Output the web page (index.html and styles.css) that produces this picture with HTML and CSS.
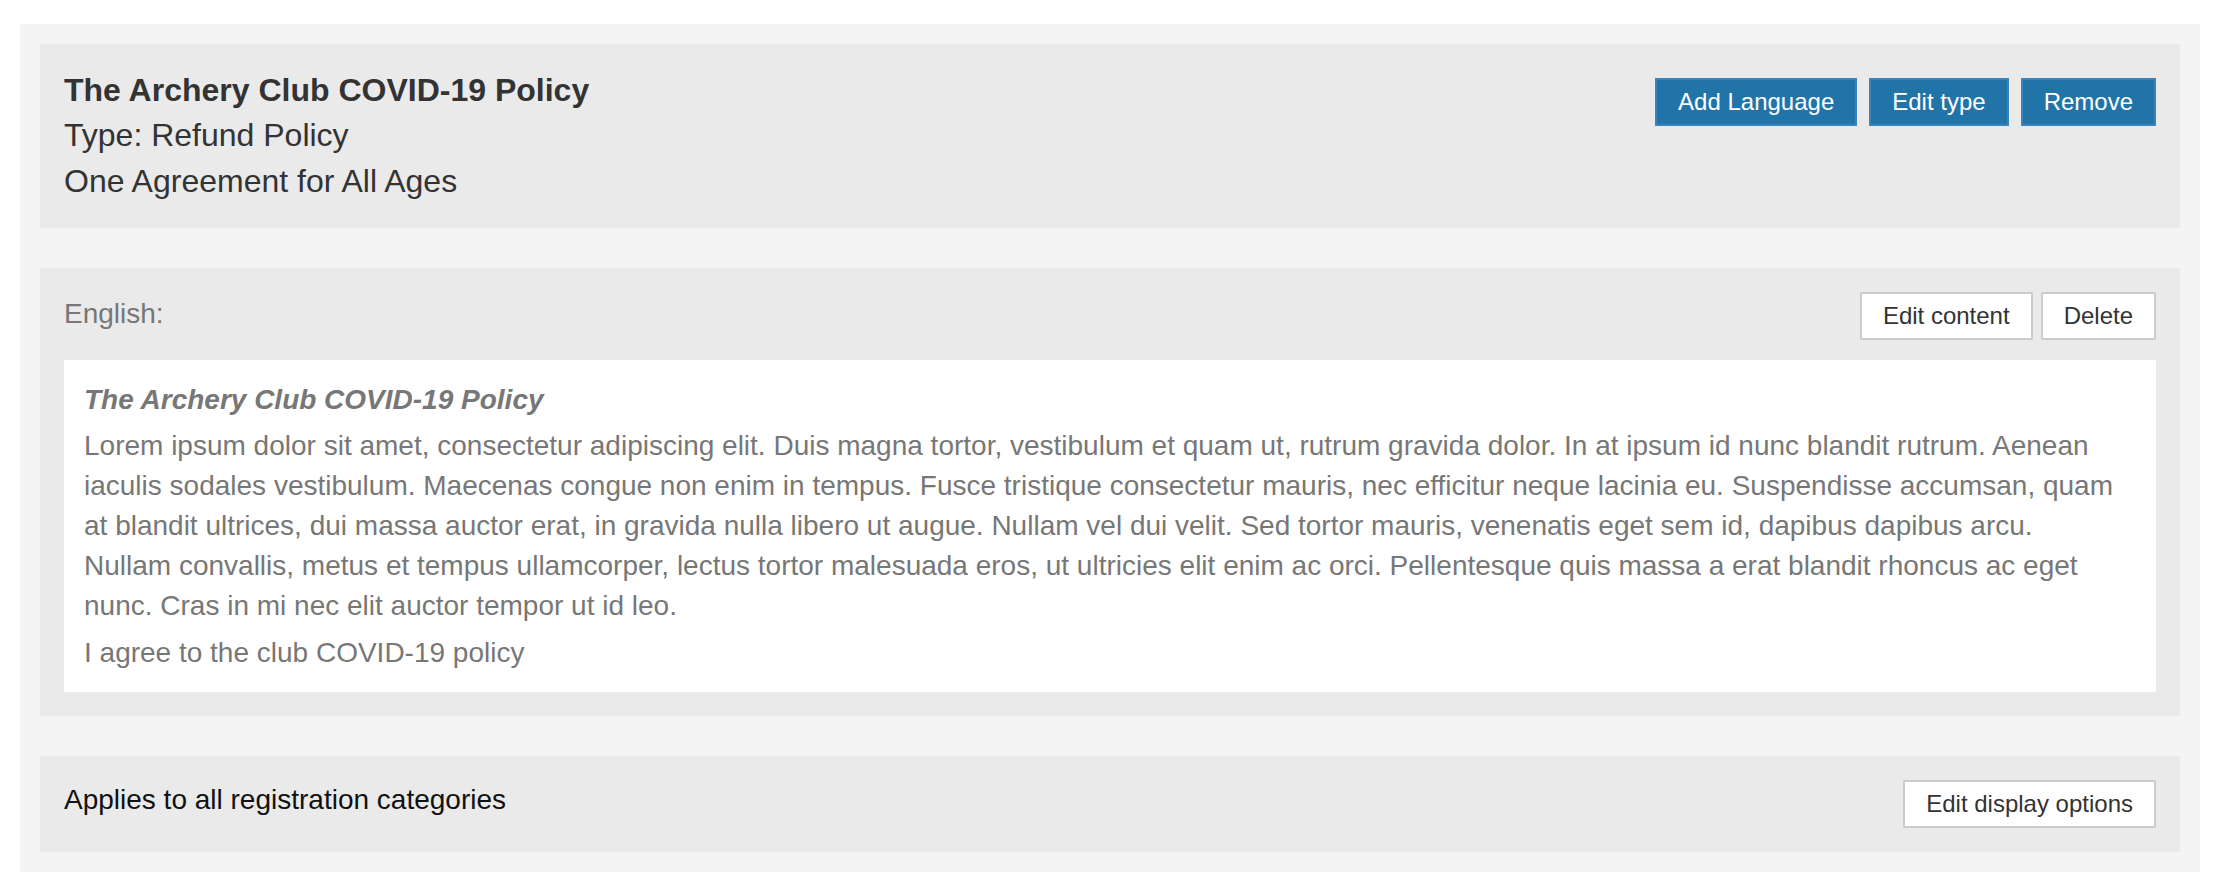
FILE: index.html
```html
<!DOCTYPE html>
<html lang="en">
<head>
    <meta charset="UTF-8">
    <meta name="viewport" content="width=device-width, initial-scale=1.0">
    <title>The Archery Club COVID-19 Policy</title>
    <link rel="stylesheet" href="styles.css">
</head>
<body>
    <div class="policy-card">
        <div class="panel panel-head">
            <div class="policy-info">
                <h2>The Archery Club COVID-19 Policy</h2>
                <div>Type: Refund Policy</div>
                <div>One Agreement for All Ages</div>
            </div>
            <div class="actions actions-primary">
                <button class="btn btn-blue">Add Language</button>
                <button class="btn btn-blue">Edit type</button>
                <button class="btn btn-blue">Remove</button>
            </div>
        </div>

        <div class="panel">
            <div class="panel-head lang-head">
                <span class="lang-label">English:</span>
                <div class="actions">
                    <button class="btn btn-white">Edit content</button>
                    <button class="btn btn-white">Delete</button>
                </div>
            </div>
            <div class="agreement">
                <h3>The Archery Club COVID-19 Policy</h3>
                <p>Lorem ipsum dolor sit amet, consectetur adipiscing elit. Duis magna tortor, vestibulum et quam ut, rutrum gravida dolor. In at ipsum id nunc blandit rutrum. Aenean iaculis sodales vestibulum. Maecenas congue non enim in tempus. Fusce tristique consectetur mauris, nec efficitur neque lacinia eu. Suspendisse accumsan, quam at blandit ultrices, dui massa auctor erat, in gravida nulla libero ut augue. Nullam vel dui velit. Sed tortor mauris, venenatis eget sem id, dapibus dapibus arcu.<br>
                Nullam convallis, metus et tempus ullamcorper, lectus tortor malesuada eros, ut ultricies elit enim ac orci. Pellentesque quis massa a erat blandit rhoncus ac eget nunc. Cras in mi nec elit auctor tempor ut id leo.</p>
                <div class="agree">I agree to the club COVID-19 policy</div>
            </div>
        </div>

        <div class="panel panel-head">
            <span class="applies">Applies to all registration categories</span>
            <button class="btn btn-white">Edit display options</button>
        </div>
    </div>
</body>
</html>
```

FILE: styles.css
```css
body {
    font-family: "Liberation Sans", Arial, sans-serif;
    margin: 0;
    padding: 0;
    background-color: #fff;
    color: #333;
}
.policy-card {
    margin: 24px 28px 0 20px;
    padding: 20px;
    background-color: #f4f4f4;
}
.panel {
    background-color: #eaeaea;
    padding: 24px;
}
.panel + .panel {
    margin-top: 40px;
}
.panel-head {
    display: flex;
    justify-content: space-between;
    align-items: flex-start;
}
.policy-info {
    font-size: 32px;
    line-height: 45.4px;
    color: #333;
}
.policy-info h2 {
    font-size: 32px;
    margin: 0;
    line-height: 45.4px;
}
.actions {
    display: flex;
    gap: 8px;
}
.actions-primary {
    gap: 12px;
    margin-top: 10px;
}
.btn {
    font-family: "Liberation Sans", Arial, sans-serif;
    font-size: 24px;
    line-height: 32px;
    padding: 6px 21px;
    border: 2px solid #ccc;
    border-radius: 0;
    background-color: #fff;
    color: #333;
    cursor: pointer;
}
.btn-blue {
    background-color: #2174a8;
    border-color: #3b83bd;
    color: #fff;
}
.btn-blue:hover {
    background-color: #1b6394;
}
.btn-white:hover {
    background-color: #f6f6f6;
}
.lang-head {
    margin-bottom: 20px;
}
.lang-label {
    font-size: 28px;
    line-height: 44px;
    color: #777;
}
.agreement {
    background-color: #fff;
    padding: 20px 20px 19px;
    color: #777;
    font-size: 28px;
    line-height: 40px;
}
.agreement h3 {
    font-size: 28px;
    font-style: italic;
    font-weight: bold;
    margin: 0;
    line-height: 40px;
}
.agreement p {
    margin: 6px 0 7px;
}
.applies {
    font-size: 28px;
    line-height: 40px;
    color: #111;
}
```
